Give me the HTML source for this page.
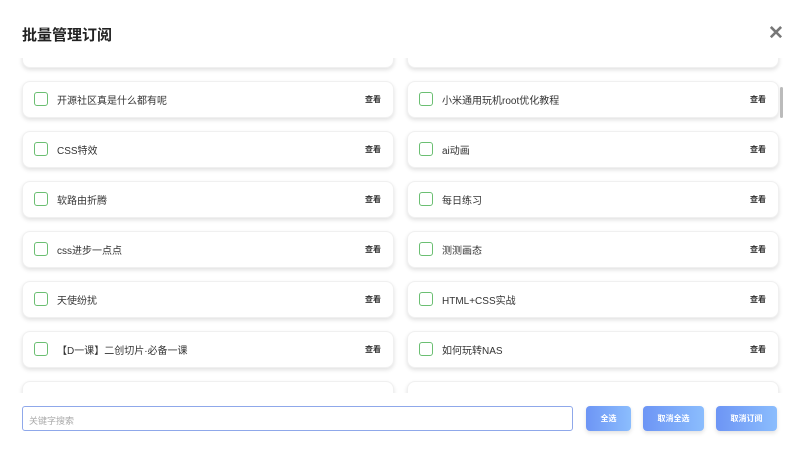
<!DOCTYPE html><html><head><meta charset="utf-8"><style>
*{margin:0;padding:0;box-sizing:border-box}
body{width:800px;height:451px;background:#fff;font-family:"Liberation Sans","Noto Sans CJK SC",sans-serif;position:relative;overflow:hidden}
.t{position:absolute;left:22px;top:24px;font-size:15px;font-weight:bold;color:#222}
.x{position:absolute;left:768px;top:24px;font-size:19px;color:#777;font-weight:bold;line-height:20px}
.area{position:absolute;left:0;top:58px;width:800px;height:335px;overflow:hidden}
.c{position:absolute;width:372px;height:37px;border-radius:8px;background:#fff;box-shadow:0 2px 4px rgba(0,0,0,.12);border:1px solid #f0f0f0}
.c i{position:absolute;left:11px;top:10px;width:14px;height:14px;border:1.5px solid #6bbf72;border-radius:3px}
.c span{position:absolute;left:34px;top:10px;font-size:10px;color:#333}
.c b{position:absolute;right:12px;top:12px;font-size:8px;color:#333}
.sb{position:absolute;left:780px;top:87px;width:3px;height:31px;background:#bbb;border-radius:2px}
.in{position:absolute;left:22px;top:406px;width:551px;height:25px;border:1.5px solid #8fa8ea;border-radius:3px;font-size:9px;color:#aaa;padding:7px 6px}
.bt{position:absolute;top:406px;height:25px;border-radius:4px;background:linear-gradient(90deg,#6d95f5,#8bbdfd);color:#fff;font-size:8px;font-weight:bold;text-align:center;line-height:25px;box-shadow:0 2px 4px rgba(0,0,0,.12)}
</style></head><body>
<div class="t">批量管理订阅</div><div class="x">✕</div>
<div class="area">
<div class="c" style="left:22px;top:-27px"></div><div class="c" style="left:407px;top:-27px"></div>
<div class="c" style="left:22px;top:23px"><i></i><span>开源社区真是什么都有呢</span><b>查看</b></div>
<div class="c" style="left:407px;top:23px"><i></i><span>小米通用玩机root优化教程</span><b>查看</b></div>
<div class="c" style="left:22px;top:73px"><i></i><span>CSS特效</span><b>查看</b></div>
<div class="c" style="left:407px;top:73px"><i></i><span>ai动画</span><b>查看</b></div>
<div class="c" style="left:22px;top:123px"><i></i><span>软路由折腾</span><b>查看</b></div>
<div class="c" style="left:407px;top:123px"><i></i><span>每日练习</span><b>查看</b></div>
<div class="c" style="left:22px;top:173px"><i></i><span>css进步一点点</span><b>查看</b></div>
<div class="c" style="left:407px;top:173px"><i></i><span>测测画态</span><b>查看</b></div>
<div class="c" style="left:22px;top:223px"><i></i><span>天使纷扰</span><b>查看</b></div>
<div class="c" style="left:407px;top:223px"><i></i><span>HTML+CSS实战</span><b>查看</b></div>
<div class="c" style="left:22px;top:273px"><i></i><span>【D一课】二创切片·必备一课</span><b>查看</b></div>
<div class="c" style="left:407px;top:273px"><i></i><span>如何玩转NAS</span><b>查看</b></div>
<div class="c" style="left:22px;top:323px"></div><div class="c" style="left:407px;top:323px"></div>
</div>
<div class="sb"></div>
<div class="in">关键字搜索</div>
<div class="bt" style="left:586px;width:45px">全选</div>
<div class="bt" style="left:643px;width:61px">取消全选</div>
<div class="bt" style="left:716px;width:61px">取消订阅</div>
</body></html>
